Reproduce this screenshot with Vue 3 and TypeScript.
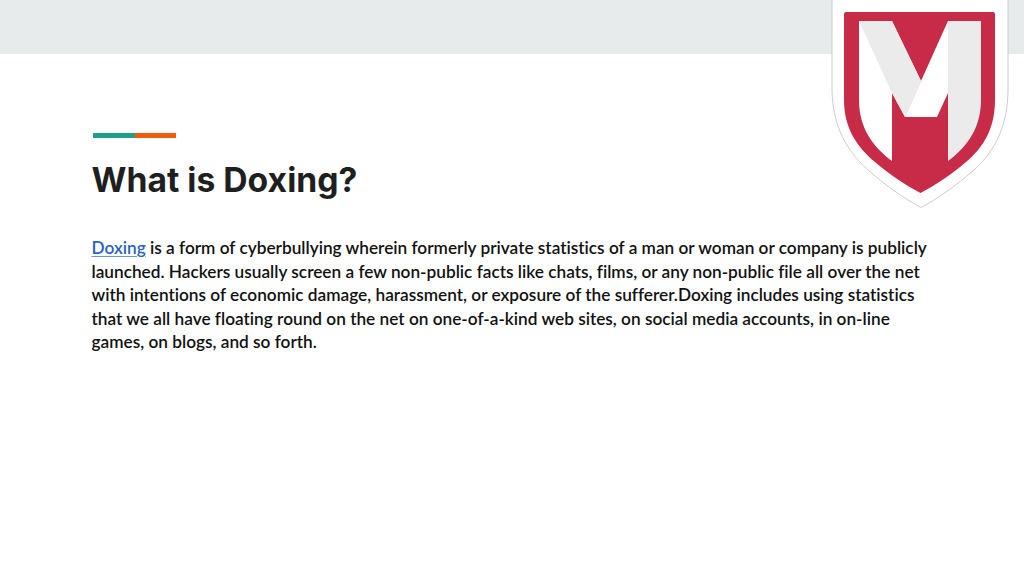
<script setup lang="ts">
const linkText: string = 'Doxing'
</script>

<template>
  <main class="slide">
    <div class="band"></div>
    <svg class="logo" viewBox="830 0 180 210" width="180" height="210" aria-label="Logo">
      <path class="outer" d="M832 -2V88C832 125 846 150 868 170C884 184 903 198 921 207.500C939 198 958 184 974 170C996 150 1008 125 1008 88V-2Z" />
      <path class="red" d="M846 12H993Q995 12 995 14V100C995 128 984 147 966 162C952 174 936 185 920.500 193C905 185 889 174 875 162C857 147 844 128 844 100V14Q844 12 846 12Z" />
      <path class="white" d="M859 21V100C859 127 872 146 892 161V93L905 117L921 81L892 21Z" />
      <path class="grey" d="M859 21H892L921 81L905 117L892 93Z" />
      <path class="white" d="M948 21L921 81L905 117H937L948 93Z" />
      <path class="grey" d="M948 21H981V100C981 127 968 146 948 161Z" />
    </svg>
    <section class="content">
      <div class="accent"><span class="teal"></span><span class="orange"></span></div>
      <h1>What is Doxing?</h1>
      <p><a href="#">{{ linkText }}</a> is a form of cyberbullying wherein formerly private statistics of a man or woman or company is publicly launched. Hackers usually screen a few non-public facts like chats, films, or any non-public file all over the net with intentions of economic damage, harassment, or exposure of the sufferer.Doxing includes using statistics that we all have floating round on the net on one-of-a-kind web sites, on social media accounts, in on-line games, on blogs, and so forth.</p>
    </section>
  </main>
</template>

<style scoped>
.slide {
  position: relative;
  width: 1024px;
  height: 576px;
  overflow: hidden;
  background: #ffffff;
  font-family: "Lato", "Liberation Sans", sans-serif;
}
.band {
  height: 54px;
  background: #e8ebeb;
}
.logo {
  position: absolute;
  left: 830px;
  top: 0;
}
.outer { fill: #ffffff; stroke: #c4c7c7; stroke-width: 0.9; }
.red { fill: #c72b47; }
.white { fill: #ffffff; }
.grey { fill: #ebebeb; }
.content {
  padding: 79px 88px 0 91.5px;
}
.accent {
  display: flex;
  width: 83px;
  height: 5px;
  margin-left: 1.5px;
}
.teal { width: 42px; background: #1f9e8c; }
.orange { flex: 1; background: #ee5d0c; }
h1 {
  margin: 20px 0 0;
  font-family: "Inter", "Lato", sans-serif;
  font-size: 33.7px;
  line-height: 44px;
  font-weight: 700;
  color: #1f1f1f;
}
p {
  margin: 34px 0 0;
  font-size: 17.24px;
  line-height: 23.5px;
  font-weight: 600;
  color: #111111;
  font-variant-ligatures: none;
}
a {
  color: #2a64bd;
  text-decoration: underline;
  text-decoration-thickness: 1px;
  text-decoration-color: #6f97d3;
  text-underline-offset: 2px;
}
</style>
